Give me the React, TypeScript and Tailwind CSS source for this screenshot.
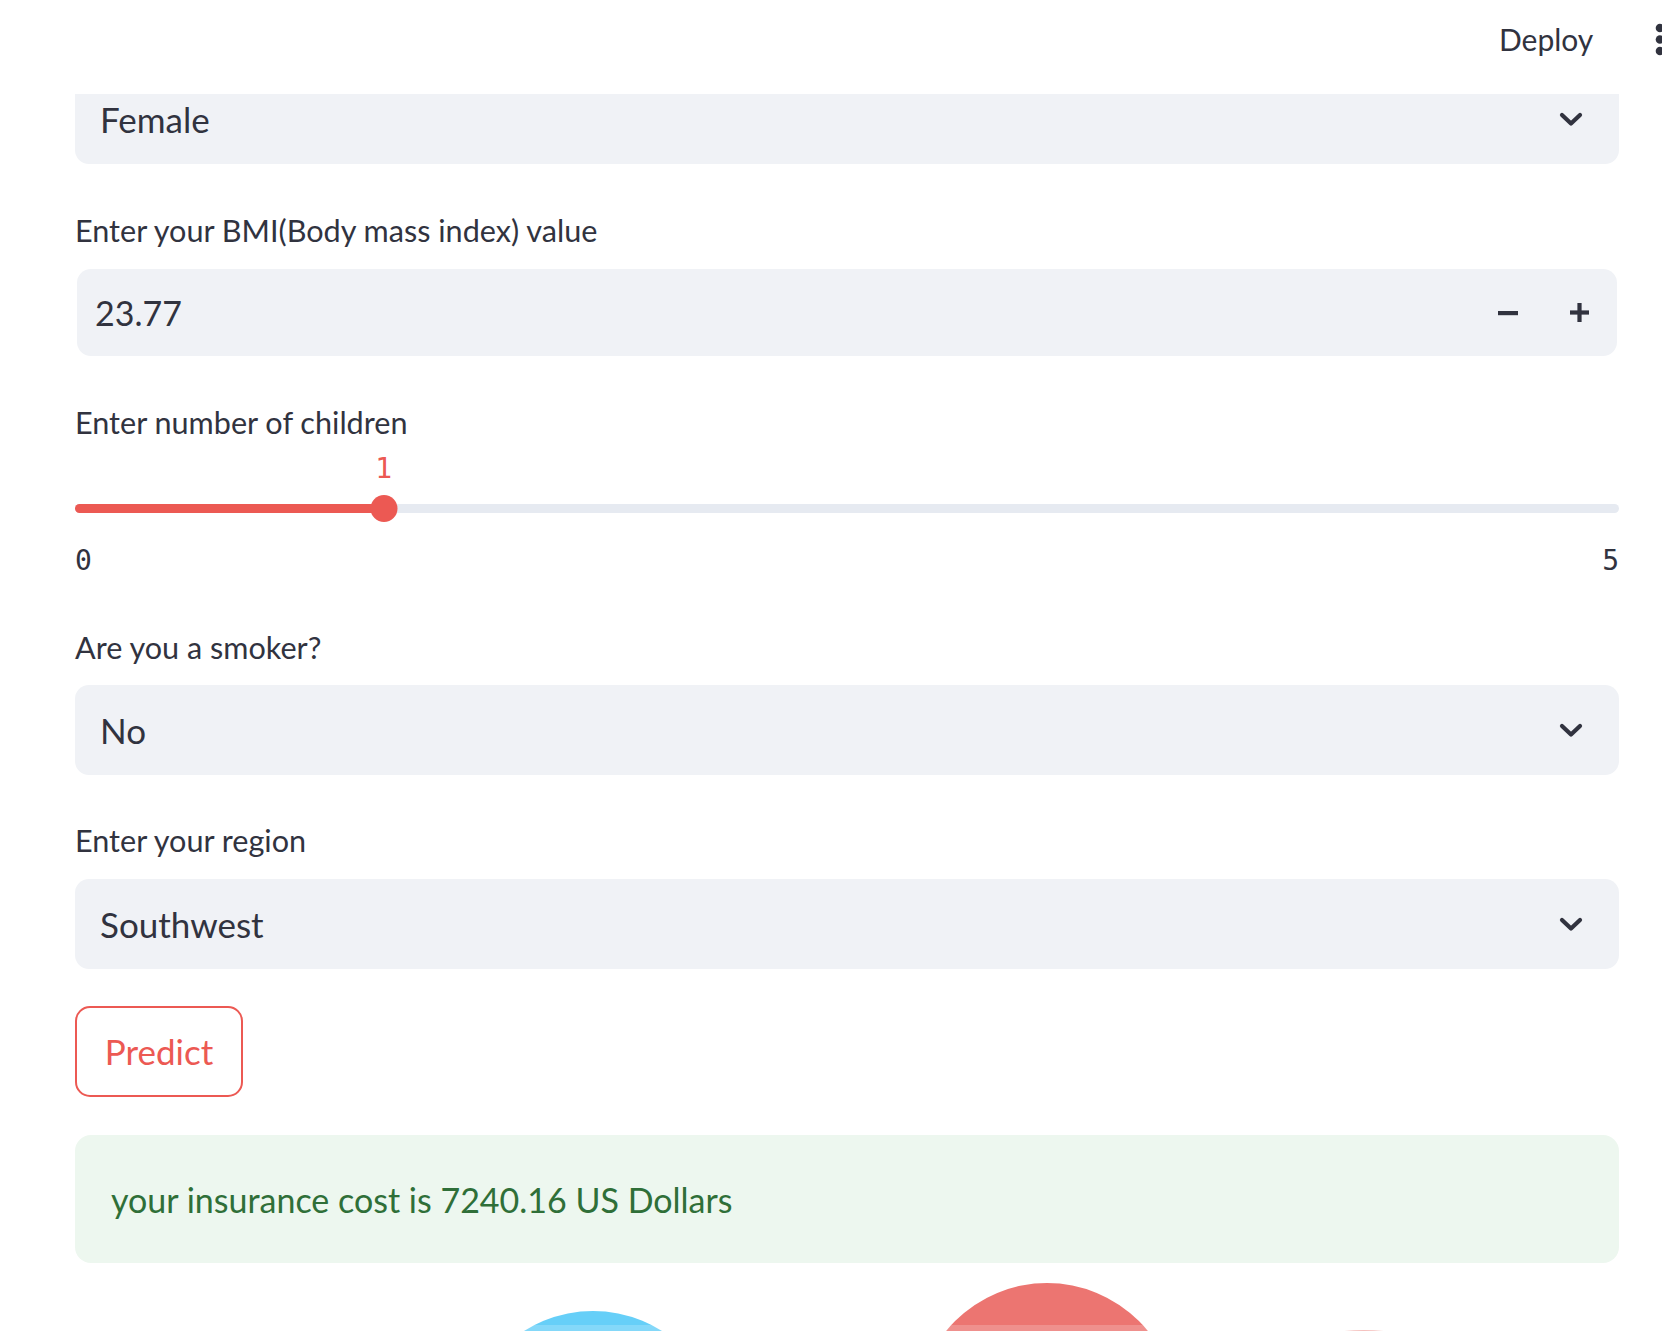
import { useState } from "react";

const FONT = { fontFamily: "Lato, 'Noto Sans', sans-serif" };
const MONO = { fontFamily: "'DejaVu Sans Mono', 'Liberation Mono', monospace" };

function Chevron() {
  return (
    <svg width="24" height="15" viewBox="0 0 24 15" className="shrink-0">
      <polyline
        points="3,3 12,11.5 21,3"
        fill="none"
        stroke="#31333f"
        strokeWidth="4.2"
        strokeLinecap="round"
        strokeLinejoin="round"
      />
    </svg>
  );
}

function SelectBox({ value }: { value: string }) {
  return (
    <div className="flex h-[90px] items-center justify-between rounded-[14px] bg-[#f0f2f6] pl-[25px] pr-[36px]">
      <span className="text-[35px] text-[#31333f]">{value}</span>
      <Chevron />
    </div>
  );
}

function Label({ text, className = "" }: { text: string; className?: string }) {
  return <div className={`h-[40px] text-[30.6px] leading-[40px] text-[#31333f] ${className}`}>{text}</div>;
}

function NumberInput({ value }: { value: string }) {
  return (
    <div className="mx-[2px] flex h-[87px] items-center rounded-[14px] bg-[#f0f2f6]">
      <span className="flex-1 pl-[18px] text-[34px] text-[#31333f]">{value}</span>
      <button className="flex h-full w-[70px] items-center justify-center">
        <svg width="20" height="6" viewBox="0 0 20 6">
          <rect x="0" y="1" width="20" height="4.2" fill="#31333f" />
        </svg>
      </button>
      <button className="mr-[2px] flex h-full w-[72px] items-center justify-center">
        <svg width="19" height="19" viewBox="0 0 19 19">
          <rect x="0" y="7.4" width="19" height="4.2" fill="#31333f" />
          <rect x="7.4" y="0" width="4.2" height="19" fill="#31333f" />
        </svg>
      </button>
    </div>
  );
}

function Slider({ value, min, max }: { value: number; min: number; max: number }) {
  const pct = ((value - min) / (max - min)) * 100;
  return (
    <div>
      <div className="relative h-[52px]">
        <span
          className="absolute top-[8px] -translate-x-1/2 text-[28px] leading-[36px] text-[#ec5953]"
          style={{ ...MONO, left: `${pct}%` }}
        >
          {value}
        </span>
      </div>
      <div className="relative flex h-[27px] items-center">
        <div className="h-[9px] w-full rounded-full bg-[#e6eaf1]" />
        <div className="absolute left-0 h-[9px] rounded-full bg-[#ec5953]" style={{ width: `${pct}%` }} />
        <div
          className="absolute h-[27px] w-[27px] -translate-x-1/2 rounded-full bg-[#ec5953]"
          style={{ left: `${pct}%` }}
        />
      </div>
      <div className="mt-[19px] flex h-[40px] items-center justify-between text-[28px] text-[#31333f]" style={MONO}>
        <span>{min}</span>
        <span>{max}</span>
      </div>
    </div>
  );
}

export default function App() {
  const [children] = useState(1);

  return (
    <div className="relative h-[1331px] w-[1662px] overflow-hidden bg-white" style={FONT}>
      <header className="absolute left-0 right-0 top-0 z-10 h-[94px] bg-white">
        <span className="absolute left-[1499px] top-[17px] text-[30px] leading-[44px] text-[#31333f]">Deploy</span>
        <svg className="absolute left-[1652px] top-[20px]" width="16" height="40" viewBox="0 0 16 40">
          <circle cx="8" cy="8" r="4.3" fill="#31333f" />
          <circle cx="8" cy="19.5" r="4.3" fill="#31333f" />
          <circle cx="8" cy="31" r="4.3" fill="#31333f" />
        </svg>
      </header>

      <main className="ml-[75px] w-[1544px] pt-[74px]">
        <SelectBox value="Female" />

        <Label text="Enter your BMI(Body mass index) value" className="mb-[18px] mt-[47px]" />
        <NumberInput value="23.77" />

        <Label text="Enter number of children" className="mt-[47px]" />
        <Slider value={children} min={0} max={5} />

        <Label text="Are you a smoker?" className="mb-[17px] mt-[47px]" />
        <SelectBox value="No" />

        <Label text="Enter your region" className="mb-[18px] mt-[46px]" />
        <SelectBox value="Southwest" />

        <button className="mt-[37px] flex h-[91px] w-[168px] items-center justify-center rounded-[15px] border-2 border-[#ec5953] bg-white text-[35px] text-[#ec5953]">
          Predict
        </button>

        <div className="mt-[38px] flex h-[128px] items-center rounded-[16px] bg-[#edf7ef] pl-[36px] text-[34px] text-[#2f6f38]">
          your insurance cost is 7240.16 US Dollars
        </div>
      </main>

      {/* chart peeking in at the bottom */}
      <svg className="absolute left-0 top-[1270px]" width="1662" height="61" viewBox="0 1270 1662 61">
        <circle cx="593" cy="1440" r="129" fill="#66cff8" />
        <circle cx="1047" cy="1413" r="130" fill="#ec7571" />
        <circle cx="1364" cy="1520" r="190" fill="#f3b2ae" />
      </svg>
      <div className="absolute bottom-0 left-0 h-[6px] w-full bg-white/20" />
    </div>
  );
}
